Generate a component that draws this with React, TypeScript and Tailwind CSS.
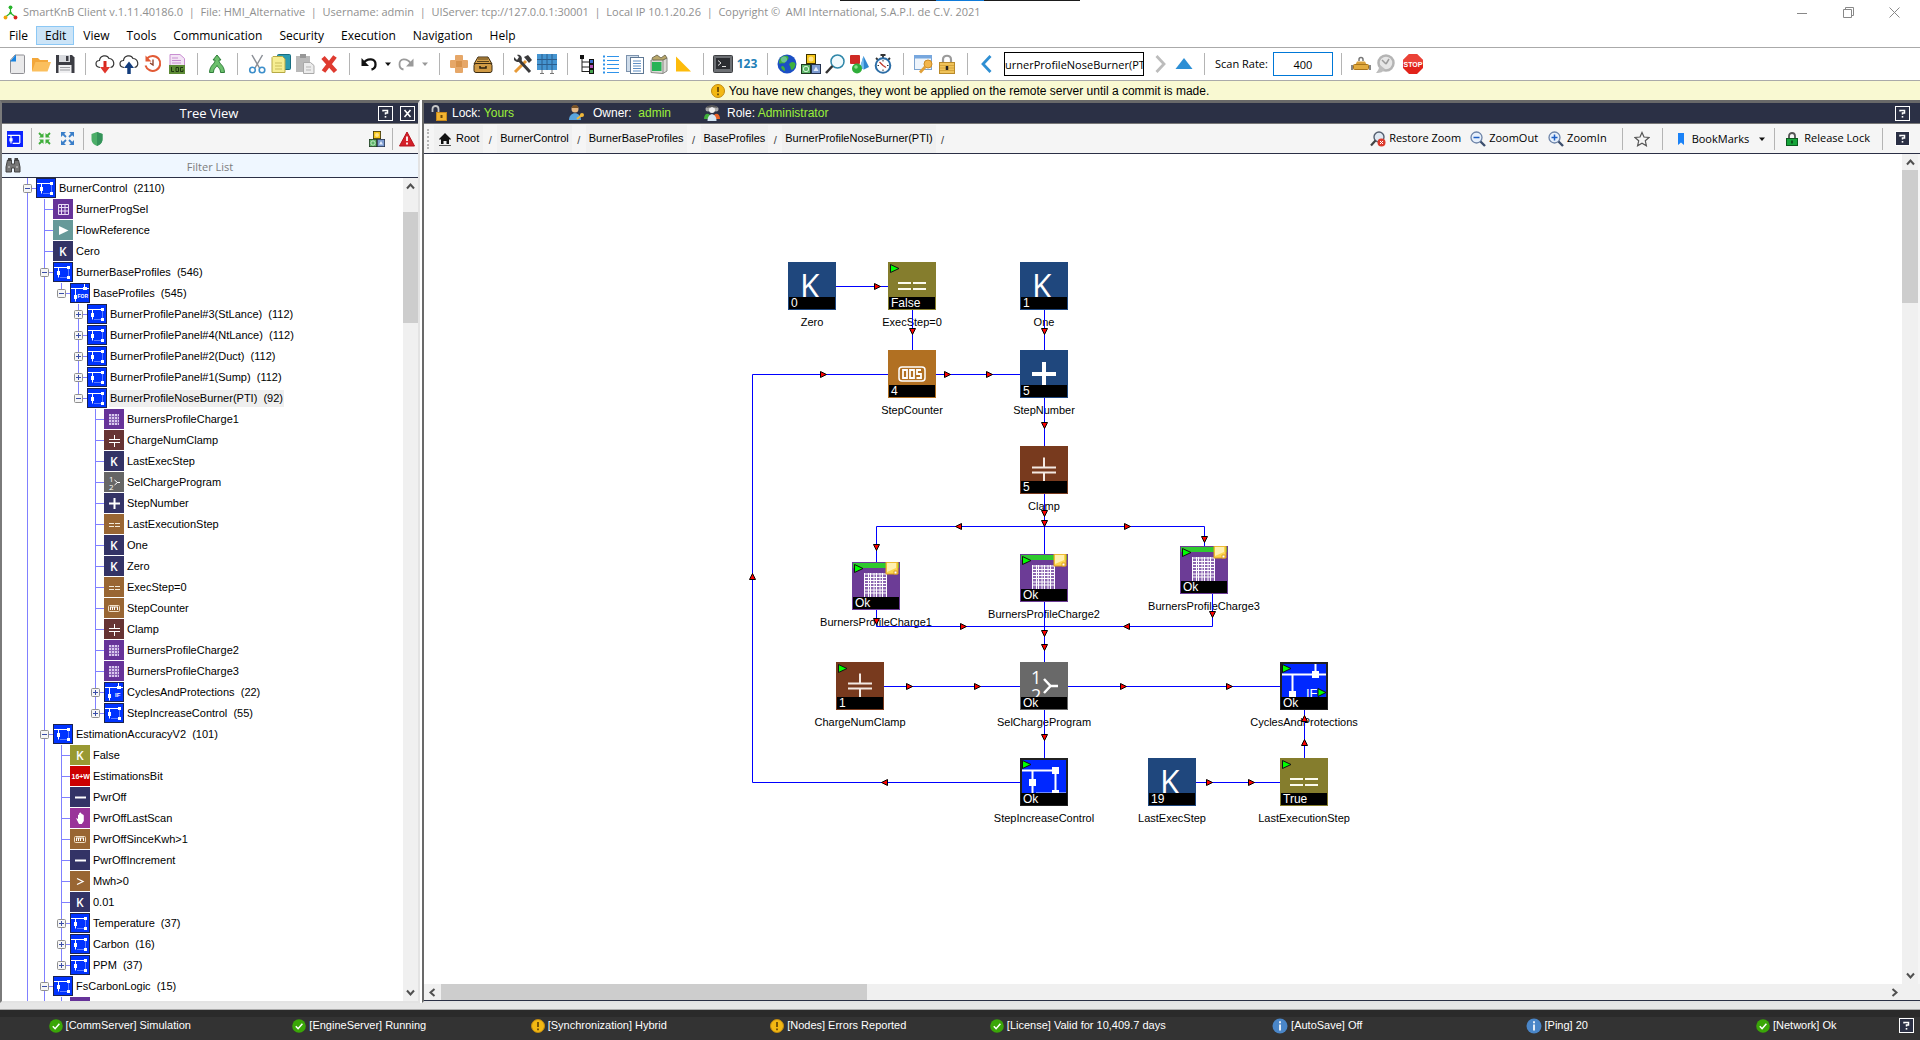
import React from 'react';

type P = { children?: React.ReactNode };

/* ---------- small drawing helpers ---------- */

const Svg = ({ children, s = 20, box = 20, cls = '' }: P & { s?: number; box?: number; cls?: string }) => (
  <svg width={s} height={s} viewBox={`0 0 ${box} ${box}`} fill="none" className={`block shrink-0 ${cls}`} aria-hidden="true">
    {children}
  </svg>
);

const Blocks = ({ s = 20 }: { s?: number }) => (
  <Svg s={s}>
    <rect x="5.500" y=".5" width="9" height="9" fill="#f5c518" stroke="#3d3200" />
    <rect x=".5" y="10.500" width="9" height="9" fill="#5fb56a" stroke="#1d3a20" />
    <rect x="10.500" y="10.500" width="9" height="9" fill="#7d9cd0" stroke="#24324f" />
    <circle cx="10" cy="5" r="2.500" fill="#ffe38a" />
    <circle cx="5" cy="15" r="2.700" stroke="#d5f5d8" />
    <path d="M15 12.500l2.500 4.500h-5z" fill="#e4ecfa" />
  </Svg>
);

const icons: Record<string, React.ReactNode> = {
  New: (
    <Svg>
      <path d="M8 1h8.500q1 0 1 1v16.500q0 1-1 1h-12q-1 0-1-1V6z" fill="#e9e9ea" stroke="#8f8f94" />
      <path d="M9 .5v7H3z" fill="#1783e0" />
    </Svg>
  ),
  Open: (
    <Svg>
      <path d="M1 17V4h6l2 2h8v3" fill="#f3a73a" />
      <path d="M1 17.500L4.500 8H20l-3.500 9.500z" fill="#fbbf5d" />
    </Svg>
  ),
  Save: (
    <Svg>
      <path d="M1 1h16l2.500 2.500V19H1z" fill="#3c3d44" />
      <rect x="4" y="1" width="11" height="7" fill="#d8dade" />
      <rect x="11" y="2" width="2.500" height="5" fill="#3c3d44" />
      <rect x="3.500" y="11" width="13" height="8" fill="#f0f0f2" />
      <path d="M5 13.500h10M5 16h10" stroke="#9a9ba0" />
    </Svg>
  ),
  Download: (
    <Svg>
      <path d="M5 13.500C-.5 13 0 6.500 4.500 6.500 5 1.500 12 0 14 4.500c5 0 7 8 1.500 9" fill="#fff" stroke="#333" strokeWidth="1.200" />
      <path d="M10 7v8" stroke="#d8261c" strokeWidth="3" />
      <path d="M5 13h10l-5 6.500z" fill="#e0352b" />
    </Svg>
  ),
  Upload: (
    <Svg>
      <path d="M5 13.500C-.5 13 0 6.500 4.500 6.500 5 1.500 12 0 14 4.500c5 0 7 8 1.500 9" fill="#fff" stroke="#333" strokeWidth="1.200" />
      <path d="M10 12v8" stroke="#123c7c" strokeWidth="3.500" />
      <path d="M5 14h10l-5-6.500z" fill="#123c7c" />
    </Svg>
  ),
  History: (
    <Svg>
      <path d="M4 4.500a7.500 7.500 0 1 1-1.500 7" stroke="#e25a35" strokeWidth="2" />
      <path d="M2.500 1.500v6h6z" fill="#e25a35" />
      <path d="M10 5.500v5.500l-3-2" stroke="#8a3a22" strokeWidth="1.300" />
    </Svg>
  ),
  Log: (
    <Svg>
      <path d="M3 .5h10l4.500 4V12H3z" fill="#f3e4f5" stroke="#c98fd2" />
      <path d="M5 4h6M5 6.500h9M5 9h9" stroke="#c98fd2" />
      <rect x="2" y="11" width="16" height="9" fill="#5c8a35" />
      <path d="M4.500 13v4.500h2.500M9 13.500h2.500v4H9zM16 13.500h-2.500v4H16v-2" stroke="#1e3610" />
    </Svg>
  ),
  Merge: (
    <Svg>
      <path d="M10 1l4 5h-2c0 5 5 4 5.500 12.500h-4C13.500 14 11 14 10 11.500 9 14 6.500 14 6.500 18.500h-4C3 10 8 11 8 6H6z" fill="#6cc06c" stroke="#2f7d3a" />
    </Svg>
  ),
  Cut: (
    <Svg>
      <path d="M5 1l7.500 13M15.500 1L8 14" stroke="#8b8f96" strokeWidth="1.500" />
      <circle cx="5.500" cy="16" r="2.800" stroke="#3d8fcb" strokeWidth="1.600" />
      <circle cx="15" cy="16" r="2.800" stroke="#3d8fcb" strokeWidth="1.600" />
    </Svg>
  ),
  Copy: (
    <Svg>
      <rect x="6.500" y=".5" width="13" height="15" rx="1" fill="#2c9bb0" stroke="#176d80" />
      <path d="M2 2.500h9.500l2.500 2.500v13.500H1V3.500z" fill="#f6ee92" stroke="#b6a944" />
      <path d="M4 9h7M4 12h7M4 15h7" stroke="#c9bd5c" />
    </Svg>
  ),
  Paste: (
    <Svg>
      <rect x="1" y="2" width="14" height="16" fill="#b9b9b9" />
      <rect x="5" y="0" width="6" height="4" fill="#979797" />
      <path d="M8.500 8.500h7l3.500 3v8H8.500z" fill="#ececec" stroke="#a9a9a9" />
      <path d="M11 13h5M11 16h5" stroke="#b5b5b5" />
    </Svg>
  ),
  Delete: (
    <Svg>
      <path d="M4 3.500l12.500 14M16 2.500L4.500 17.500" stroke="#df3b30" strokeWidth="4.500" />
    </Svg>
  ),
  Undo: (
    <Svg>
      <path d="M4 9.500C8 3.500 17 4 16.500 10.500 16.500 13 15 15 12.500 15.500" stroke="#111" strokeWidth="2.300" />
      <path d="M2.500 4v8H10z" fill="#111" />
    </Svg>
  ),
  Redo: (
    <Svg>
      <path d="M15 9.500C11 3.500 3 4 3.500 10.500 3.500 13 5 15 7.500 15.500" stroke="#9a9a9a" strokeWidth="1.800" />
      <path d="M17.500 4.500v8H10z" fill="#9a9a9a" />
    </Svg>
  ),
  Patch: (
    <Svg>
      <path d="M7 2h6v5h5v6h-5v5H7v-5H2V7h5z" fill="#e6a768" stroke="#e6a768" strokeWidth="2" strokeLinejoin="round" />
      <rect x="7" y="7" width="6" height="6" fill="#d6924c" />
    </Svg>
  ),
  Archive: (
    <Svg>
      <path d="M5 3h10l4 7H1z" fill="#d8a24a" stroke="#3a2a12" />
      <path d="M5 5h10M4 7.500h12" stroke="#5b431d" />
      <rect x="1" y="9.500" width="18" height="9" rx="2" fill="#d09a45" stroke="#3a2a12" />
      <path d="M7 12v2h6v-2" stroke="#2c200e" strokeWidth="1.500" />
    </Svg>
  ),
  Tools: (
    <Svg>
      <path d="M2 18L13 7" stroke="#e79a37" strokeWidth="3" />
      <path d="M11 3l4-2 4 5-3 3z" fill="#3a3a3c" />
      <path d="M6 6l11 12" stroke="#3a3a3c" strokeWidth="3" />
      <path d="M1 3l3 3 2-3-2-2c3-1 6 2 4.500 6-2 2-6 1-7.500-1z" fill="#3a3a3c" />
    </Svg>
  ),
  Grid: (
    <Svg>
      <rect x="0" y="0" width="20" height="16" fill="#4595d1" />
      <path d="M0 5.500h20M0 10.500h20M5 0v16M10 0v16M15 0v16" stroke="#2c5f8e" />
      <path d="M5 16v4M15 16v4M3 19.500h4M13 19.500h4" stroke="#777" />
    </Svg>
  ),
  Tree: (
    <Svg>
      <rect x="3" y="1" width="4" height="4" fill="#111" />
      <path d="M5 5v13M5 8h8M5 13h8M5 17.500h8" stroke="#222" />
      <rect x="12.500" y="5.500" width="4" height="4" fill="#3b6fd0" stroke="#111" />
      <rect x="12.500" y="10.500" width="4" height="4" fill="#b452b8" stroke="#111" />
      <rect x="12.500" y="15.500" width="4" height="4" fill="#4aa451" stroke="#111" />
    </Svg>
  ),
  List: (
    <Svg>
      <path d="M6 2.500h12M6 6.500h12M6 10.500h12M6 14.500h12M6 18.500h12" stroke="#2f93ea" />
      <path d="M2 2.500h2M2 6.500h2M2 10.500h2M2 14.500h2M2 18.500h2" stroke="#2f93ea" strokeWidth="2" />
    </Svg>
  ),
  Documents: (
    <Svg>
      <rect x="1.500" y="1.500" width="12" height="16" fill="#cfdcea" stroke="#7d93ad" />
      <rect x="5.500" y="3.500" width="13" height="16" fill="#fff" stroke="#5f7894" />
      <path d="M8 7h8M8 9.500h8M8 12h8M8 14.500h8M8 17h8" stroke="#5f8fc4" />
    </Svg>
  ),
  Bin: (
    <Svg>
      <path d="M2 6l12-1 4-1v13l-4 2.500-12-1z" fill="#d9d9d5" stroke="#8a8a86" />
      <path d="M14 5v14" stroke="#8a8a86" />
      <rect x="3" y="8" width="9.500" height="9" fill="#27b357" />
      <path d="M3 4l5-3 4 3 4-3 2 3-4 2H4z" fill="#b9a86a" stroke="#777056" />
    </Svg>
  ),
  Triangle: (
    <Svg>
      <path d="M3 2.500V17.500h15z" fill="#fdbb0b" />
    </Svg>
  ),
  Terminal: (
    <Svg>
      <rect x=".5" y="1.500" width="19" height="17" rx="1" fill="#6d7074" stroke="#3d3f42" />
      <rect x="3" y="4" width="14" height="11" fill="#2b2d31" />
      <path d="M5 6.500l3 2.500-3 2.500M9 12.500h4" stroke="#e0e0e0" />
    </Svg>
  ),
  Globe: (
    <Svg>
      <circle cx="10" cy="10" r="9.500" fill="#1b4fc4" />
      <path d="M4 3.500c3-2.500 7-2 7.500 0 0 3-3 3-3.500 5.500-2 1-4-.5-5.500 1C1.500 7 2.500 5 4 3.500zM13 9c2-2 5-1 5.500 1 0 3-2 5-3.500 6-2-1-1-3-2-4-1-1-1-2 0-3zM5 12c2 0 3.500 2 3 5-2-.5-3.500-2-4-4z" fill="#3fb13c" />
      <circle cx="7" cy="5.500" r="3" fill="#a7d8ff" opacity=".45" />
    </Svg>
  ),
  Blocks: <Blocks />,
  Search: (
    <Svg>
      <circle cx="12.500" cy="7.500" r="6.500" stroke="#2e86a8" strokeWidth="1.500" fill="#f0fafd" />
      <path d="M7.500 12L1 19" stroke="#333" strokeWidth="2.500" />
    </Svg>
  ),
  Shapes: (
    <Svg>
      <path d="M14.500 2L20 13l-5 2.500-4-2z" fill="#2f86cf" />
      <path d="M14.500 2L15 15.500l-4-2z" fill="#76bdf0" />
      <rect x="1" y="1" width="10" height="9" rx="1" fill="#cf2a24" />
      <circle cx="8" cy="14.500" r="5" fill="#2fae3a" />
      <circle cx="7" cy="13" r="1.800" fill="#8fe08f" />
    </Svg>
  ),
  Stopwatch: (
    <Svg>
      <path d="M7.500 1h5M10 1v3M3 4l2 2M17 4l-2 2" stroke="#333" strokeWidth="1.800" />
      <circle cx="10" cy="11.500" r="7.300" fill="#fff" stroke="#2c6da6" strokeWidth="2" />
      <path d="M10 11.500L6.500 8M10 11.500l3 2" stroke="#c0392b" strokeWidth="1.300" />
      <path d="M10 6v1.500M10 15.500V17M4.500 11.500H6M14 11.500h1.500" stroke="#333" />
    </Svg>
  ),
  Permissions: (
    <Svg>
      <rect x="1.500" y="1.500" width="17" height="14" fill="#eef4fb" stroke="#7da3cf" />
      <rect x="1" y="1" width="18" height="3.500" fill="#77a7de" />
      <circle cx="15" cy="10" r="4" fill="#f2b54b" stroke="#c98a25" />
      <path d="M12.500 12.500L7 18.500" stroke="#e0a038" strokeWidth="2.800" />
    </Svg>
  ),
  Padlock: (
    <Svg>
      <path d="M6 9V5.500c0-5 8-5 8 0V9" stroke="#9a9a9a" strokeWidth="2.200" />
      <rect x="2.500" y="8.500" width="15" height="11" fill="#efc35a" stroke="#b98a2a" />
      <path d="M3 11.500h14M3 14h14M3 16.500h14" stroke="#d7a63c" />
      <path d="M10 12v4" stroke="#222" strokeWidth="2.500" />
    </Svg>
  ),
  Back: (
    <Svg>
      <path d="M13.500 2L6 10l7.500 8" stroke="#2f8fd3" strokeWidth="2.800" />
    </Svg>
  ),
  Forward: (
    <Svg>
      <path d="M6.500 2L14 10l-7.500 8" stroke="#bcbcbc" strokeWidth="2.800" />
    </Svg>
  ),
  Up: (
    <Svg>
      <path d="M10 4l8.500 11h-17z" fill="#2d8fd5" />
    </Svg>
  ),
  Plate: (
    <Svg>
      <path d="M8 7V5.500a2 2 0 0 1 4 0V7" stroke="#777" strokeWidth="1.500" />
      <path d="M6 7.500h8l2 4H4z" fill="#d9a13b" />
      <rect x="2.500" y="10.500" width="15" height="5" rx="1" fill="#e2ab3f" stroke="#a8741c" />
      <path d="M1 11v5M19 11v5" stroke="#888" strokeWidth="2" />
    </Svg>
  ),
  Timer: (
    <Svg>
      <circle cx="11" cy="9" r="7.500" stroke="#b4b4b4" strokeWidth="2.500" fill="#e6e6e6" />
      <path d="M11 10l-4-4M11 10l3-5" stroke="#9c9c9c" strokeWidth="1.500" />
      <path d="M1 19c5 0 7-1 9-4l-5-4C4 14 3 17 1 19z" fill="#bdbdbd" />
    </Svg>
  ),
  Stop: (
    <Svg>
      <path d="M6 0h8l6 6v8l-6 6H6l-6-6V6z" fill="#e2231a" />
      <path d="M6 0h8l6 6v4H0V6z" fill="#f2564b" opacity=".6" />
      <text x="10" y="12.500" fontSize="7" fontWeight="700" fontFamily="Liberation Sans" textAnchor="middle" fill="#fff">STOP</text>
    </Svg>
  ),
};

const Sep = ({ cls = 'ml-[8px] mr-[7px]' }: { cls?: string }) => <span className={`h-[22px] w-px shrink-0 bg-[#b4b4b4] ${cls}`} />;

const Tool = ({ name }: { name: string }) => (
  <button type="button" aria-label={name} className="flex h-6 w-6 shrink-0 items-center justify-center">
    {icons[name]}
  </button>
);

const Caret = ({ color = '#111' }: { color?: string }) => (
  <Svg s={6} box={6}><path d="M0 1.500h6L3 5z" fill={color} /></Svg>
);

const group = (names: string[]) => names.map((n) => <Tool key={n} name={n} />);

const Help = ({ label = 'Help', glyph = '?' }: { label?: string; glyph?: string }) => (
  <button type="button" aria-label={label} className="flex h-[15px] w-[15px] shrink-0 items-center justify-center border border-white bg-[#2b3045]">
    {glyph === '?' ? (
      <Svg s={9} box={9}>
        <path d="M2 2.500V1.500h4.500v2.500h-2v1.500" stroke="#fff" strokeWidth="1.500" />
        <rect x="3.700" y="7" width="1.600" height="1.600" fill="#fff" />
      </Svg>
    ) : (
      <Svg s={9} box={9}><path d="M1.500 1l6 7M7.500 1l-6 7" stroke="#fff" strokeWidth="1.600" /></Svg>
    )}
  </button>
);

/* ---------- header rows ---------- */

function TitleBar() {
  return (
    <header className="relative flex h-6 shrink-0 items-center pl-[3px] text-[11px] text-[#8f8f8f]">
      <div className="absolute top-0 left-1/2 flex h-px w-[240px] -translate-x-1/2 justify-center bg-[#1b1b1b]">
        <span className="h-px w-12 bg-[#0f7ad8]" />
      </div>
      <Svg s={15} box={15}>
        <path d="M7.500 3v5M7.500 8l-5 4M7.500 8l5 4" stroke="#27b32b" strokeWidth="1.200" />
        <circle cx="7.500" cy="2.300" r="1.900" fill="#27b32b" />
        <circle cx="2.500" cy="12.500" r="1.900" fill="#f0a30a" />
        <circle cx="12.500" cy="12.500" r="1.900" fill="#d9221c" />
        <circle cx="7.500" cy="8" r="1.300" fill="#27b32b" />
      </Svg>
      <h1 className="ml-[5px] flex-1 whitespace-pre">
        {'SmartKnB Client v.1.11.40186.0  |  File: HMI_Alternative  |  Username: admin  |  UIServer: tcp://127.0.0.1:30001  |  Local IP 10.1.20.26  |  Copyright ©  AMI International, S.A.P.I. de C.V. 2021'}
      </h1>
      <div className="flex gap-[35px] pr-[20px]">
        <button type="button" aria-label="Minimize"><Svg s={11} box={11}><path d="M0 6.500h10" stroke="#888" /></Svg></button>
        <button type="button" aria-label="Restore"><Svg s={11} box={11}><path d="M.5 2.500h8v8h-8zM2.500 2.500v-2h8v8h-2" stroke="#888" /></Svg></button>
        <button type="button" aria-label="Close"><Svg s={11} box={11}><path d="M.5.5l10 10M10.500.5l-10 10" stroke="#888" /></Svg></button>
      </div>
    </header>
  );
}

function MenuBar() {
  return (
    <nav className="flex h-[23px] shrink-0 items-center text-[12px] text-black">
      {['File', 'Edit', 'View', 'Tools', 'Communication', 'Security', 'Execution', 'Navigation', 'Help'].map((m) => (
        <button
          key={m}
          type="button"
          className={`h-[19px] border pr-[7px] pl-[8px] leading-[16px] ${m === 'Edit' ? 'border-[#8cc8f5] bg-[#cce4f7]' : 'border-transparent'}`}
        >
          {m}
        </button>
      ))}
    </nav>
  );
}

function ToolBar() {
  return (
    <div className="flex h-[34px] shrink-0 items-center overflow-hidden border-y border-[#aaa] bg-white pl-[5px]">
      {group(['New', 'Open', 'Save'])}
      <Sep />
      {group(['Download', 'Upload', 'History', 'Log'])}
      <Sep />
      {group(['Merge'])}
      <Sep />
      {group(['Cut', 'Copy', 'Paste', 'Delete'])}
      <Sep />
      <Tool name="Undo" />
      <button type="button" aria-label="Undo list" className="flex w-[13px] justify-center"><Caret /></button>
      <Tool name="Redo" />
      <button type="button" aria-label="Redo list" className="flex w-[13px] justify-center"><Caret color="#999" /></button>
      <Sep />
      {group(['Patch', 'Archive'])}
      <Sep />
      {group(['Tools', 'Grid'])}
      <Sep />
      {group(['Tree', 'List', 'Documents', 'Bin', 'Triangle'])}
      <Sep />
      <Tool name="Terminal" />
      <button type="button" className="flex w-6 justify-center text-[12px] font-bold text-[#1e7fb8]">123</button>
      <Sep />
      {group(['Globe', 'Blocks', 'Search', 'Shapes', 'Stopwatch'])}
      <Sep />
      {group(['Permissions', 'Padlock'])}
      <Sep />
      <Tool name="Back" />
      <input
        aria-label="Current path"
        defaultValue="urnerProfileNoseBurner(PTI)"
        className="mr-1 ml-[5px] h-6 w-[140px] border border-black bg-white text-[11px] text-black outline-none"
      />
      {group(['Forward', 'Up'])}
      <Sep />
      <label className="ml-[3px] flex items-center gap-[5px] text-[11px] text-black">
        Scan Rate:
        <input defaultValue="400" className="h-6 w-[60px] border border-[#0078d7] bg-white text-center text-[11px] outline-none" />
      </label>
      <Sep />
      {group(['Plate', 'Timer'])}
      <span className="w-1" />
      {group(['Stop'])}
    </div>
  );
}

const Alert = ({ s = 14 }: { s?: number }) => (
  <Svg s={s} box={14}>
    <circle cx="7" cy="7" r="6.500" fill="#f3b813" stroke="#c08a10" />
    <path d="M7 3v5M7 9.500v1.700" stroke="#5b3d04" strokeWidth="1.600" />
  </Svg>
);
const Check = () => (
  <Svg s={14} box={14}>
    <circle cx="7" cy="7" r="6.800" fill="#3aa608" />
    <path d="M3.800 7.200l2.300 2.500 4.300-5" stroke="#fff" strokeWidth="1.500" />
  </Svg>
);
const Info = () => (
  <Svg s={16} box={16}>
    <circle cx="8" cy="8" r="7.500" fill="#4a86c8" />
    <path d="M8 6.500v6M8 3.200v2" stroke="#fff" strokeWidth="1.700" />
  </Svg>
);

/* ---------- tree ---------- */

type Kind = 'sub' | 'por' | 'if' | 'grid' | 'table' | 'play' | 'k' | 'kf' | 'clamp' | 'sel' | 'plus' | 'eq' | 'cnt' | 'bits' | 'minus' | 'hand' | 'gt';
type Item = [number, Kind, string, string?, ('+' | '-')?];

const tree: Item[] = [
  [0, 'sub', 'BurnerControl', '2110', '-'],
  [1, 'table', 'BurnerProgSel'],
  [1, 'play', 'FlowReference'],
  [1, 'k', 'Cero'],
  [1, 'sub', 'BurnerBaseProfiles', '546', '-'],
  [2, 'por', 'BaseProfiles', '545', '-'],
  [3, 'sub', 'BurnerProfilePanel#3(StLance)', '112', '+'],
  [3, 'sub', 'BurnerProfilePanel#4(NtLance)', '112', '+'],
  [3, 'sub', 'BurnerProfilePanel#2(Duct)', '112', '+'],
  [3, 'sub', 'BurnerProfilePanel#1(Sump)', '112', '+'],
  [3, 'sub', 'BurnerProfileNoseBurner(PTI)', '92', '-'],
  [4, 'grid', 'BurnersProfileCharge1'],
  [4, 'clamp', 'ChargeNumClamp'],
  [4, 'k', 'LastExecStep'],
  [4, 'sel', 'SelChargeProgram'],
  [4, 'plus', 'StepNumber'],
  [4, 'eq', 'LastExecutionStep'],
  [4, 'k', 'One'],
  [4, 'k', 'Zero'],
  [4, 'eq', 'ExecStep=0'],
  [4, 'cnt', 'StepCounter'],
  [4, 'clamp', 'Clamp'],
  [4, 'grid', 'BurnersProfileCharge2'],
  [4, 'grid', 'BurnersProfileCharge3'],
  [4, 'if', 'CyclesAndProtections', '22', '+'],
  [4, 'sub', 'StepIncreaseControl', '55', '+'],
  [1, 'sub', 'EstimationAccuracyV2', '101', '-'],
  [2, 'kf', 'False'],
  [2, 'bits', 'EstimationsBit'],
  [2, 'minus', 'PwrOff'],
  [2, 'hand', 'PwrOffLastScan'],
  [2, 'cnt', 'PwrOffSinceKwh>1'],
  [2, 'minus', 'PwrOffIncrement'],
  [2, 'gt', 'Mwh>0'],
  [2, 'k', '0.01'],
  [2, 'sub', 'Temperature', '37', '+'],
  [2, 'sub', 'Carbon', '16', '+'],
  [2, 'sub', 'PPM', '37', '+'],
  [1, 'sub', 'FsCarbonLogic', '15', '-'],
  [2, 'table', ''],
];

const treeBg: Record<Kind, string> = {
  sub: '#0033ff', por: '#0033ff', if: '#0033ff', grid: '#663399', table: '#663399', play: '#669999', k: '#333366', kf: '#999933',
  clamp: '#663333', sel: '#666666', plus: '#333366', eq: '#996633', cnt: '#996633', bits: '#cc0000', minus: '#333366', hand: '#993399', gt: '#996633',
};

const Txt = ({ x, y, s, children, w = 400, f = 'Open Sans', c = '#fff' }: P & { x: number; y: number; s: number; w?: number; f?: string; c?: string }) => (
  <text x={x} y={y} fontSize={s} fontWeight={w} fontFamily={f} fill={c}>{children}</text>
);

function TreeIcon({ k }: { k: Kind }) {
  const blue = k === 'sub' || k === 'por' || k === 'if';
  return (
    <Svg>
      <rect width="20" height="20" fill={treeBg[k]} />
      {blue && <rect x=".5" y=".5" width="19" height="19" stroke="#1b2350" />}
      {k === 'sub' && (
        <>
          <path d="M1 5.500h15M5.500 5.500v10" stroke="#fff" />
          <path d="M15.500 5v10M7 15.500h8" stroke="#5c7bff" />
          <rect x="14" y="4" width="3" height="3" fill="#fff" /><rect x="4" y="9" width="3" height="4" fill="#fff" /><rect x="14" y="14" width="3" height="3" fill="#fff" />
        </>
      )}
      {(k === 'por' || k === 'if') && (
        <>
          <path d="M1 5.500h18M5.500 5.500v13M14.500 1v4" stroke="#fff" />
          <rect x="13" y="4" width="4" height="3" fill="#fff" /><rect x="4" y="12" width="3" height="4" fill="#fff" />
          {k === 'por' ? <Txt x={7.5} y={15} s={5} w={700} f="Liberation Sans">FOR</Txt> : <Txt x={11} y={15} s={6} w={700} f="Liberation Sans">IF</Txt>}
        </>
      )}
      {k === 'table' && <path d="M5.500 5.500h10v10h-10zM5.500 8.500h10M5.500 12h10M8.500 5.500v10M12 5.500v10" stroke="#e9ddf5" />}
      {k === 'grid' && (
        <>
          <rect x="5" y="5" width="10" height="11" fill="#d9c8ee" />
          <path d="M7.500 5v11M10.500 5v11M13.500 5v11M5 7.500h10M5 10.500h10M5 13.500h10" stroke="#8a63b5" />
        </>
      )}
      {k === 'play' && <path d="M6 6l9.500 4.500L6 15z" fill="#fff" />}
      {(k === 'k' || k === 'kf') && <Txt x={6} y={15} s={12} w={600}>K</Txt>}
      {k === 'clamp' && <path d="M5 9.500h11M5 12.500h11M10.500 5v4M10.500 13v4" stroke="#fff" />}
      {k === 'sel' && (
        <>
          <Txt x={5} y={9.5} s={8}>1</Txt><Txt x={5} y={18} s={8}>2</Txt>
          <path d="M10.500 8l3 2.500-3 2.500M13 10.500h3" stroke="#fff" />
        </>
      )}
      {k === 'plus' && <path d="M5 10.500h11M10.500 5v11" stroke="#fff" strokeWidth="2" />}
      {k === 'eq' && <path d="M5 9.500h5M11 9.500h5M5 12.500h5M11 12.500h5" stroke="#f3ead9" />}
      {k === 'cnt' && (
        <>
          <rect x="4.500" y="7.500" width="11" height="6" rx="1" stroke="#f1dfc4" />
          <path d="M6.500 9v3M8.500 9v3M10.500 9v3M13.500 9v3M6 9h8" stroke="#fff" />
        </>
      )}
      {k === 'bits' && <Txt x={1.5} y={13} s={7} w={700} f="Liberation Sans">16+W</Txt>}
      {k === 'minus' && <path d="M5 10.500h11" stroke="#fff" strokeWidth="2" />}
      {k === 'hand' && <path d="M6 10l2 1V7l1.200-.5V5l1.500-.5 1 1.500 1.300.5.800 1V13l-2 3H9z" fill="#fff" />}
      {k === 'gt' && <path d="M7 7.500l6 3-6 3" stroke="#fff" strokeWidth="1.300" />}
    </Svg>
  );
}

function guideContinues(i: number, level: number) {
  for (let j = i + 1; j < tree.length; j++) {
    if (tree[j][0] < level) return false;
    if (tree[j][0] === level) return true;
  }
  return level < 3;
}

function TreeRow({ i }: { i: number }) {
  const [depth, kind, label, count, toggle] = tree[i];
  const selected = label === 'BurnerProfileNoseBurner(PTI)';
  return (
    <li className="flex h-[21px] shrink-0 pl-[17px]" role="treeitem" aria-expanded={toggle ? toggle === '-' : undefined}>
      {Array.from({ length: depth + 1 }, (_, c) => {
        const own = c === depth;
        const cont = guideContinues(i, c);
        return (
          <span key={c} className="relative w-[17px] shrink-0">
            {(cont || own) && <span className={`absolute top-0 left-2 w-px bg-[#8080ff] ${cont ? 'h-full' : 'h-[10px]'}`} />}
            {own && <span className="absolute top-[10px] left-2 h-px w-[9px] bg-[#8080ff]" />}
            {own && toggle && (
              <button type="button" aria-label={toggle === '-' ? `Collapse ${label}` : `Expand ${label}`} className="absolute top-[6px] left-1 block h-[9px] w-[9px]">
                <Svg s={9} box={9}>
                  <rect x=".5" y=".5" width="8" height="8" rx="1" fill="#f6f6f6" stroke="#8f8f8f" />
                  <path d={toggle === '-' ? 'M2 4.500h5' : 'M2 4.500h5M4.500 2v5'} stroke="#3a4ea8" />
                </Svg>
              </button>
            )}
          </span>
        );
      })}
      <TreeIcon k={kind} />
      <span className={`ml-[2px] h-[17px] self-center whitespace-pre px-px text-[11px] leading-[17px] text-black ${selected ? 'bg-[#efefef]' : ''}`}>
        {count ? `${label}  (${count})` : label}
      </span>
    </li>
  );
}

const Chevron = ({ d }: { d: string }) => (
  <Svg s={9} box={9}><path d={d} stroke="#505050" strokeWidth="2" /></Svg>
);
const UP = 'M1 6.500l3.500-4 3.500 4', DOWN = 'M1 2.500l3.500 4 3.500-4', LEFT = 'M6.500 1l-4 3.500 4 3.500', RIGHT = 'M2.500 1l4 3.500-4 3.500';

function TreePanel() {
  return (
    <aside className="flex w-[420px] shrink-0 flex-col border-t-[3px] border-r-2 border-b-2 border-l-2 border-t-[#696969] border-r-[#e3e3e3] border-b-[#e3e3e3] border-l-[#7a7a7a] bg-white">
      <div className="flex h-5 shrink-0 items-center bg-[#2b3045] pr-[3px] text-white">
        <h2 className="flex-1 pl-[38px] text-center text-[13px] leading-5 font-['Open_Sans','Noto_Sans',sans-serif]">Tree View</h2>
        <div className="flex gap-[7px]"><Help /><Help label="Close panel" glyph="x" /></div>
      </div>
      <div className="flex h-[31px] shrink-0 items-center border-t border-b border-t-[#777] border-b-[#2b3045] bg-[#f5f5f5] pr-[3px] pl-[5px]">
        <button type="button" aria-label="Blocks view" className="mr-2"><Svg s={16}><rect width="20" height="20" fill="#0a22ff" /><path d="M1 5.500h15M5 5.500v10M16 5v10M7 15.500h9" stroke="#fff" strokeWidth="1.500" /><rect x="3" y="9" width="4" height="4" fill="#fff" /></Svg></button>
        <Sep cls="" />
        <button type="button" aria-label="Collapse all" className="ml-[6px]">
          <Svg s={13} box={13}><path d="M1 1l3 3M12 1L9 4M1 12l3-3M12 12L9 9" stroke="#3fae3a" strokeWidth="1.800" /><path d="M5.500 1v4.500H1zM7.500 1v4.500H12zM5.500 12V7.500H1zM7.500 12V7.500H12z" fill="#3fae3a" /></Svg>
        </button>
        <button type="button" aria-label="Expand all" className="mr-[9px] ml-[10px]">
          <Svg s={13} box={13}><path d="M2 2l3 3M11 2L8 5M2 11l3-3M11 11L8 8" stroke="#3b7fc9" strokeWidth="1.800" /><path d="M0 0h5L0 5zM13 0H8l5 5zM0 13h5L0 8zM13 13H8l5-5z" fill="#3b7fc9" /></Svg>
        </button>
        <Sep cls="" />
        <button type="button" aria-label="Protection" className="ml-[6px]">
          <Svg s={14} box={14}><path d="M7 0l5.500 2v5c0 4-3 6-5.500 7C4.500 13 1.500 11 1.500 7V2z" fill="#4cae68" /><path d="M7 0l5.500 2v5c0 4-3 6-5.500 7z" fill="#35935a" /></Svg>
        </button>
        <span className="flex-1" />
        <button type="button" aria-label="Blocks"><Blocks s={16} /></button>
        <Sep cls="mr-[6px] ml-[7px]" />
        <button type="button" aria-label="Warnings">
          <Svg s={16} box={16}><path d="M8 1l7.500 14H.5z" fill="#d5202a" stroke="#b5121c" /><path d="M8 5.500V10M8 11.500v2" stroke="#fff" strokeWidth="1.800" /></Svg>
        </button>
      </div>
      <div className="relative h-6 shrink-0 border-b border-[#2b3045] bg-[#eff7ff]">
        <div className="absolute top-[3px] left-[3px]">
          <Svg s={16} box={16}><path d="M1 15v-5l1.500-7h4v4h3V3h4L15 10v5H9.500v-4h-3v4z" fill="#777" stroke="#444" /><path d="M3 1h3.500v3H3zM9.500 1H13v3H9.500z" fill="#444" /><path d="M3 10h2M11 10h2" stroke="#ddd" /></Svg>
        </div>
        <input aria-label="Filter List" placeholder="Filter List" className="h-full w-full bg-transparent text-center text-[11px] outline-none font-['Open_Sans','Noto_Sans',sans-serif] placeholder:text-[#7d7d7d]" />
      </div>
      <div className="flex min-h-0 flex-1">
        <ul role="tree" className="flex min-w-0 flex-1 flex-col overflow-hidden">
          {tree.map((_, i) => <TreeRow key={i} i={i} />)}
        </ul>
        <div className="flex w-[15px] shrink-0 flex-col items-center bg-[#f0f0f0]">
          <div className="flex h-[34px] items-start pt-1"><Chevron d={UP} /></div>
          <div className="h-[111px] w-full bg-[#cdcdcd]" />
          <div className="flex flex-1 items-end pb-1"><Chevron d={DOWN} /></div>
        </div>
      </div>
    </aside>
  );
}

/* ---------- diagram ---------- */

type NodeKind = 'k' | 'eq' | 'cnt' | 'plus' | 'clamp' | 'grid' | 'sel' | 'sub' | 'if';
type DNode = { x: number; y: number; k: NodeKind; v: string; label: string; run?: boolean };

const nodes: DNode[] = [
  { x: 364, y: 108, k: 'k', v: '0', label: 'Zero' },
  { x: 464, y: 108, k: 'eq', v: 'False', label: 'ExecStep=0', run: true },
  { x: 596, y: 108, k: 'k', v: '1', label: 'One' },
  { x: 464, y: 196, k: 'cnt', v: '4', label: 'StepCounter' },
  { x: 596, y: 196, k: 'plus', v: '5', label: 'StepNumber' },
  { x: 596, y: 292, k: 'clamp', v: '5', label: 'Clamp' },
  { x: 428, y: 408, k: 'grid', v: 'Ok', label: 'BurnersProfileCharge1', run: true },
  { x: 596, y: 400, k: 'grid', v: 'Ok', label: 'BurnersProfileCharge2', run: true },
  { x: 756, y: 392, k: 'grid', v: 'Ok', label: 'BurnersProfileCharge3', run: true },
  { x: 412, y: 508, k: 'clamp', v: '1', label: 'ChargeNumClamp', run: true },
  { x: 596, y: 508, k: 'sel', v: 'Ok', label: 'SelChargeProgram' },
  { x: 856, y: 508, k: 'if', v: 'Ok', label: 'CyclesAndProtections', run: true },
  { x: 596, y: 604, k: 'sub', v: 'Ok', label: 'StepIncreaseControl', run: true },
  { x: 724, y: 604, k: 'k', v: '19', label: 'LastExecStep' },
  { x: 856, y: 604, k: 'eq', v: 'True', label: 'LastExecutionStep', run: true },
];

const nodeBg: Record<NodeKind, string> = {
  k: '#1f477d', plus: '#1f477d', eq: '#857d2d', cnt: '#b17022', clamp: '#783a1e', grid: '#6c3c96', sel: '#696969', sub: '#0028ff', if: '#0028ff',
};

function NodeArt({ k, run }: { k: NodeKind; run?: boolean }) {
  const blue = k === 'sub' || k === 'if';
  return (
    <Svg s={48} box={48}>
      <rect width="48" height="48" fill={nodeBg[k]} />
      {k === 'k' && <Txt x={12} y={36} s={32}>K</Txt>}
      {k === 'eq' && <path d="M10 21h13M25 21h13M10 27h13M25 27h13" stroke="#fbfbee" strokeWidth="2" />}
      {k === 'plus' && <path d="M12 24h24M24 12v23" stroke="#fff" strokeWidth="4" />}
      {k === 'clamp' && <path d="M12 21.500h24M12 26.500h24M24 11.500v10M24 27v8" stroke="#f4e9e3" strokeWidth="2" />}
      {k === 'cnt' && (
        <>
          <rect x="11" y="17" width="26" height="14" rx="3" stroke="#fff" strokeWidth="1.500" />
          <path d="M15 20h4v8h-4zM22 20h4v8h-4zM33 20h-4v4h4v4h-4.500" stroke="#fff" strokeWidth="1.800" />
        </>
      )}
      {k === 'grid' && (
        <>
          <rect x="1" y="1" width="46" height="5" fill="#2fc92f" />
          <rect x="12" y="11" width="23" height="24" fill="#8c66b0" />
          <path d="M12.500 11v24M16.500 11v24M18.500 11v24M22 11v24M24.500 11v24M28 11v24M30.500 11v24M34.500 11v24M12 12h23M12 15.500h23M12 18.500h23M12 21.500h23M12 24.500h23M12 28h23M12 31h23" stroke="#fff" />
          <path d="M34 0h12v12H34z" fill="#fbd64f" stroke="#e0a020" />
          <path d="M35 1h9v5l-9 4z" fill="#fff0b0" />
          <path d="M42 9h3v3h-3z" fill="#fff" stroke="#e0a020" />
        </>
      )}
      {k === 'sel' && (
        <>
          <Txt x={11} y={22} s={18}>1</Txt><Txt x={11} y={40} s={18}>2</Txt>
          <path d="M24 17l6.500 7-6.500 7M30 24h8" stroke="#fff" strokeWidth="2.500" />
        </>
      )}
      {blue && <rect x="1" y="1" width="46" height="46" stroke="#202020" strokeWidth="2" />}
      {k === 'sub' && (
        <>
          <path d="M2 12.500h31M12.500 13v22M35.500 16v18" stroke="#fff" strokeWidth="2" />
          <path d="M16 34.500h30" stroke="#6f8cff" />
          <path d="M32 9h7v7h-7zM9 21h7v7H9zM32 32h7v3h-7z" fill="#fff" />
        </>
      )}
      {k === 'if' && (
        <>
          <path d="M2 12.500h44M12.500 13v18M35.500 2v10" stroke="#fff" strokeWidth="2" />
          <path d="M32 9h7v7h-7zM9 29h7v6H9z" fill="#fff" />
          <Txt x={26} y={36} s={13} f="Liberation Sans">IF</Txt>
          <path d="M38 26.500v8l8-4z" fill="#0f0" stroke="#111" />
        </>
      )}
      <rect x="1" y="35" width="46" height="12" fill="#000" />
      {run && <path d="M2.500 2.500v8l8.500-4z" fill="#0f0" stroke="#111" />}
    </Svg>
  );
}

function DiagramNode({ n }: { n: DNode }) {
  return (
    <div className="absolute w-12" style={{ left: n.x, top: n.y }}>
      <div className="relative">
        <NodeArt k={n.k} run={n.run} />
        <span className="absolute bottom-px left-[3px] text-[12px] leading-[12px] text-white">{n.v}</span>
      </div>
      <div className="mt-[5px] flex justify-center text-[11px] leading-[14px] whitespace-nowrap text-black"><span>{n.label}</span></div>
    </div>
  );
}

const wires = [
  'M412 132.500h52', 'M488.500 156v40', 'M620.500 156v40', 'M620.500 244v48', 'M512 220.500h84', 'M464 220.500H328.500V628.500H596',
  'M620.500 340v60', 'M452.500 408V372.500H780.500V392', 'M452.500 456v16.500H788.500V440', 'M620.500 448v60', 'M460 532.500h136', 'M644 532.500h212',
  'M620.500 556v48', 'M880.500 556v48', 'M772 628.500h84',
];
const arrows: [number, number, 'r' | 'l' | 'u' | 'd'][] = [
  [453, 132, 'r'], [488, 177, 'd'], [620, 177, 'd'], [399, 220, 'r'], [523, 220, 'r'], [565, 220, 'r'], [620, 271, 'd'], [620, 359, 'd'],
  [620, 369, 'd'], [534, 372, 'l'], [703, 372, 'r'], [452, 393, 'd'], [780, 385, 'd'], [328, 422, 'u'], [452, 467, 'd'], [788, 460, 'd'],
  [539, 472, 'r'], [702, 472, 'l'], [620, 479, 'd'], [620, 493, 'd'], [485, 532, 'r'], [553, 532, 'r'], [699, 532, 'r'], [805, 532, 'r'],
  [620, 583, 'd'], [880, 564, 'u'], [880, 588, 'u'], [460, 628, 'l'], [785, 628, 'r'], [827, 628, 'r'],
];
const arrowPath = { r: 'M-2.500 -2.500L3.500 0.500L-2.500 3.500z', l: 'M3.500 -2.500L-2.500 0.500L3.500 3.500z', d: 'M-2.500 -2.500H3.500L0.500 3.500z', u: 'M-2.500 3.500H3.500L0.500 -2.500z' };

function Diagram() {
  return (
    <div className="relative min-w-0 flex-1 overflow-hidden bg-white">
      {nodes.map((n) => <DiagramNode key={n.label} n={n} />)}
      <svg className="pointer-events-none absolute top-0 left-0" width="1000" height="700" fill="none" aria-hidden="true">
        <path d={wires.join('')} stroke="#0000ff" />
        {arrows.map(([x, y, d], i) => <path key={i} d={arrowPath[d]} transform={`translate(${x} ${y})`} fill="#ff0000" stroke="#000" />)}
      </svg>
    </div>
  );
}

const Zoom = ({ sign }: { sign: string }) => (
  <Svg s={16} box={16}>
    <circle cx="6.500" cy="6.500" r="5.500" fill="#e6effb" stroke="#6d84a8" strokeWidth="1.300" />
    <path d="M10.500 10.500l4.500 4.500" stroke="#3d4f6e" strokeWidth="2.400" />
    <path d={sign === '+' ? 'M3.500 6.500h6M6.500 3.500v6' : 'M3.500 6.500h6'} stroke="#1f5fc4" strokeWidth="1.500" />
  </Svg>
);

function Workspace() {
  const crumbs = ['BurnerControl', 'BurnerBaseProfiles', 'BaseProfiles', 'BurnerProfileNoseBurner(PTI)'];
  return (
    <main className="ml-[2px] flex min-w-0 flex-1 flex-col border-t-[3px] border-b-2 border-l-2 border-t-[#696969] border-b-[#e3e3e3] border-l-[#696969] bg-[#f5f5f5]">
      <div className="flex h-5 shrink-0 items-center bg-[#2b3045] pr-[10px] pl-[7px] text-[12px] text-white">
        <p className="flex w-[137px] items-center">
          <Svg s={16} box={16}><path d="M1.500 7V4c0-4 6-4 6 0v4" stroke="#c9c9c9" strokeWidth="1.800" /><rect x="5.500" y="7.500" width="10" height="8" fill="#f2b431" stroke="#c98a1c" /><path d="M10.500 10v3" stroke="#6b4708" strokeWidth="2" /></Svg>
          <span className="ml-[5px]">Lock: <span className="text-[#9cf03a]">Yours</span></span>
        </p>
        <p className="flex w-[136px] items-center">
          <Svg s={16} box={16}><circle cx="7" cy="4" r="3.500" fill="#e7b884" /><path d="M3.500 3c0-4 7-4 7 0z" fill="#7a5326" /><path d="M1 15c0-9 12-9 12 0z" fill="#5aa5e0" /><path d="M9 14l5-4" stroke="#f0b83a" strokeWidth="2" /><circle cx="14" cy="10" r="2" fill="#f0b83a" /></Svg>
          <span className="ml-[9px] whitespace-pre">Owner:  <span className="text-[#9cf03a]">admin</span></span>
        </p>
        <p className="flex flex-1 items-center">
          <Svg s={16} box={16}><path d="M0 14c0-7 7-7 7 0z" fill="#3fae3a" /><path d="M9 14c0-7 7-7 7 0z" fill="#e8632a" /><path d="M3.500 16c0-9 9-9 9 0z" fill="#d5e6f5" /><circle cx="4" cy="4" r="2.500" fill="#a9a9a9" /><circle cx="12" cy="4" r="2.500" fill="#a9a9a9" /><circle cx="8" cy="5" r="3" fill="#f0f0f0" /><path d="M2 3c2-4 10-4 12 0l-6-1z" fill="#555" /></Svg>
          <span className="ml-[7px]">Role: <span className="text-[#9cf03a]">Administrator</span></span>
        </p>
        <Help />
      </div>
      <div className="flex h-[31px] shrink-0 items-center border-t border-b border-t-[#777] border-b-[#2b3045] text-[11px] text-black">
        <span className="ml-[3px] h-5 border-l-2 border-dotted border-[#b5b5b5]" />
        <nav aria-label="Breadcrumb" className="flex items-center">
          <a href="#root" className="ml-[5px] flex h-7 items-center gap-[4px] bg-[#f0f0f0] px-1">
            <Svg s={14} box={14}><path d="M1 7l6-6 6 6-1 1-1-1v5H8.500V9h-3v3H3V7L2 8z" fill="#111" /><path d="M1 13.500h12" stroke="#555" /></Svg>
            Root
          </a>
          {crumbs.map((c) => (
            <React.Fragment key={c}>
              <span className="w-[14px] pt-1 text-center text-[#444]">/</span>
              <a href={`#${c}`} className="flex h-7 items-center bg-[#f0f0f0] px-[3px]">{c}</a>
            </React.Fragment>
          ))}
          <span className="w-[14px] pt-1 text-center text-[#444]">/</span>
        </nav>
        <span className="flex-1" />
        <div className="flex items-center pr-[10px] font-['Open_Sans','Noto_Sans',sans-serif]">
          <button type="button" className="flex items-center gap-[3px]">
            <Svg s={16} box={16}><circle cx="9" cy="6" r="5" fill="#dfe8f2" stroke="#555f70" strokeWidth="1.400" /><path d="M5.500 9.500L1 14.500" stroke="#444" strokeWidth="2.200" /><circle cx="11.500" cy="11.500" r="4" fill="#dc3a2c" /><path d="M10 10l3 3M13 10l-3 3" stroke="#fff" /></Svg>
            Restore Zoom
          </button>
          <button type="button" className="ml-[9px] flex items-center gap-[3px]"><Zoom sign="-" />ZoomOut</button>
          <button type="button" className="ml-[10px] flex items-center gap-[3px]"><Zoom sign="+" />ZoomIn</button>
          <Sep cls="ml-[15px] mr-[11px]" />
          <button type="button" aria-label="Favourite"><Svg s={16} box={16}><path d="M8 1.500l2 4.500 5 .5-3.700 3.300 1.100 4.900L8 12.200l-4.400 2.500 1.100-4.900L1 6.500 6 6z" stroke="#555" strokeWidth="1.200" /></Svg></button>
          <Sep cls="mx-[12px]" />
          <button type="button" className="flex items-center gap-[5px] pt-px">
            <Svg s={12} box={12}><path d="M3 0h6v12L6 9.500 3 12z" fill="#1a82f7" /></Svg>
            BookMarks
            <span className="ml-[5px]"><Caret /></span>
          </button>
          <Sep cls="ml-[9px] mr-[10px]" />
          <button type="button" className="flex items-center gap-[5px]">
            <Svg s={14} box={14}><path d="M4 7V4c0-4 6-4 6 0v3" stroke="#555" strokeWidth="1.800" /><rect x="1.500" y="6.500" width="11" height="7" fill="#16a53a" stroke="#0c5a1e" /><path d="M7 8.500v3" stroke="#083b13" strokeWidth="1.500" /></Svg>
            Release Lock
          </button>
          <Sep cls="mx-[12px]" />
          <Help />
        </div>
      </div>
      <div className="flex min-h-0 flex-1">
        <Diagram />
        <div className="mr-[2px] flex w-4 shrink-0 flex-col items-center bg-[#f0f0f0]">
          <div className="flex h-4 items-center"><Chevron d={UP} /></div>
          <div className="h-[133px] w-full bg-[#cdcdcd]" />
          <div className="flex flex-1 items-end pb-1"><Chevron d={DOWN} /></div>
        </div>
      </div>
      <div className="flex h-[17px] shrink-0 items-center border-b border-[#2b3045] bg-[#f0f0f0]">
        <div className="flex w-[17px] justify-center"><Chevron d={LEFT} /></div>
        <div className="h-full w-[426px] bg-[#cdcdcd]" />
        <div className="flex flex-1 justify-end pr-[21px]"><Chevron d={RIGHT} /></div>
      </div>
    </main>
  );
}

function StatusBar() {
  const items: [React.ReactNode, string][] = [
    [<Check />, '[CommServer] Simulation'],
    [<Check />, '[EngineServer] Running'],
    [<Alert />, '[Synchronization] Hybrid'],
    [<Alert />, '[Nodes] Errors Reported'],
    [<Check />, '[License] Valid for 10,409.7 days'],
    [<Info />, '[AutoSave] Off'],
    [<Info />, '[Ping] 20'],
    [<Check />, '[Network] Ok'],
  ];
  return (
    <footer className="relative grid h-[30px] shrink-0 grid-cols-8 items-start border-t-[7px] border-[#2a2a2a] bg-[#333] pr-1 text-[11px] text-white">
      {items.map(([icon, text]) => (
        <div key={text} className="flex h-[17px] items-center justify-center gap-[3px] whitespace-nowrap">{icon}<span>{text}</span></div>
      ))}
      <div className="absolute top-[1px] right-[6px]"><Help /></div>
    </footer>
  );
}

export default function App() {
  return (
    <div className="flex h-screen flex-col overflow-hidden bg-white font-['Liberation_Sans',Arial,sans-serif]">
      <div className="shrink-0 font-['Open_Sans','Noto_Sans',sans-serif]">
        <TitleBar />
        <MenuBar />
        <ToolBar />
      </div>
      <div role="status" className="flex h-[19px] shrink-0 items-center justify-center gap-1 bg-[#f9f9d2] text-[12px] text-black">
        <Alert />
        <span>You have new changes, they wont be applied on the remote server until a commit is made.</span>
      </div>
      <div className="flex min-h-0 flex-1">
        <TreePanel />
        <Workspace />
      </div>
      <div className="h-[7px] shrink-0 border-b border-[#aaa] bg-[#e6e6e6]" />
      <StatusBar />
    </div>
  );
}
